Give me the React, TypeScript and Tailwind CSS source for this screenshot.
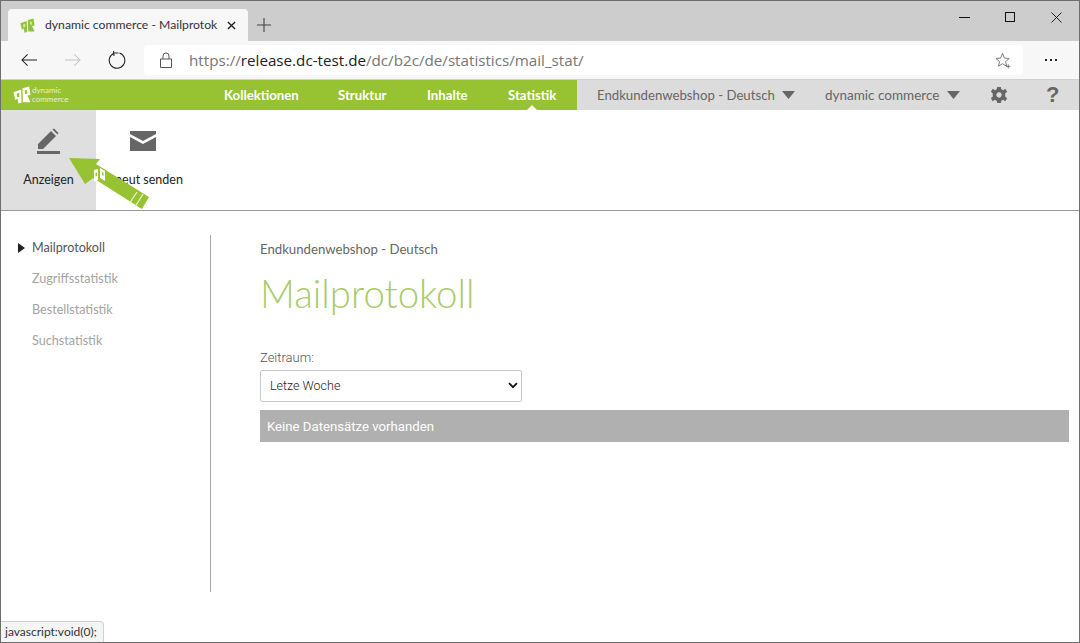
import React from "react";

const site = { fontFamily: 'Lato, "Open Sans", sans-serif' };
const light = { fontFamily: 'Roboto, "Open Sans", sans-serif' };

function Logo({ className, color, cut }: { className: string; color: string; cut: string }) {
  return (
    <svg viewBox="0 0 20 20" className={className}>
      <path d="M0.5 7 L9 4 L9.5 18.5 L6 19.5 L5 14 L2.5 15.5 Z" fill={color} />
      <path d="M10.5 2.5 L18 0.5 L19.5 10 L16 10.5 L19.5 18 L11 18 Z" fill={color} />
      <path d="M4 8.5 L7 7.5 L7 12 L4.5 12.5 Z M13 5 L15.5 4.5 L16 8.5 L13.5 9 Z" fill={cut} />
    </svg>
  );
}

function Caret() {
  return (
    <svg viewBox="0 0 13 8" className="h-[8px] w-[13px]">
      <path d="M0 0 H13 L6.5 8 Z" fill="#666666" />
    </svg>
  );
}

export default function App() {
  return (
    <div className="relative flex h-[643px] w-[1080px] flex-col overflow-hidden border border-[#6e6e6e] bg-white" style={site}>
      {/* Tab strip */}
      <div className="flex h-[40px] shrink-0 items-end bg-[#cdcdcd]">
        <div className="ml-[7px] flex h-[32px] w-[240px] items-center rounded-t-[4px] bg-[#f7f7f7] pl-[12px] pr-[10px]">
          <Logo className="h-[15px] w-[15px] shrink-0" color="#8fc23f" cut="#d6e8a8" />
          <span className="ml-[10px] w-[174px] whitespace-nowrap text-[12.2px] text-[#333333]">dynamic commerce - Mailprotok</span>
          <svg viewBox="0 0 10 10" className="ml-[8px] h-[9px] w-[9px] shrink-0">
            <path d="M1 1 L9 9 M9 1 L1 9" stroke="#222222" strokeWidth="1.5" />
          </svg>
        </div>
        <svg viewBox="0 0 14 14" className="mb-[9px] ml-[9px] h-[14px] w-[14px]">
          <path d="M7 0 V14 M0 7 H14" stroke="#444444" strokeWidth="1.1" />
        </svg>
        <div className="mb-[8px] ml-auto flex h-[32px] items-center">
          <div className="flex w-[46px] justify-center">
            <div className="h-px w-[11px] bg-[#111111]" />
          </div>
          <div className="flex w-[46px] justify-center">
            <div className="h-[10px] w-[10px] border border-[#111111]" />
          </div>
          <div className="flex w-[46px] justify-center">
            <svg viewBox="0 0 11 11" className="h-[11px] w-[11px]">
              <path d="M0.5 0.5 L10.5 10.5 M10.5 0.5 L0.5 10.5" stroke="#111111" strokeWidth="0.9" />
            </svg>
          </div>
        </div>
      </div>

      {/* Address bar */}
      <div className="flex h-[39px] shrink-0 items-center border-b border-[#d0d0d0] bg-[#f7f7f7]">
        <svg viewBox="0 0 18 14" className="ml-[20px] h-[14px] w-[17px]">
          <path d="M17 7 H1 M7 1 L1 7 L7 13" stroke="#222222" strokeWidth="1.1" fill="none" />
        </svg>
        <svg viewBox="0 0 18 14" className="ml-[26px] h-[14px] w-[17px]">
          <path d="M1 7 H17 M11 1 L17 7 L11 13" stroke="#c4c4c4" strokeWidth="1.1" fill="none" />
        </svg>
        <svg viewBox="0 0 18 18" className="ml-[27px] h-[18px] w-[18px]">
          <path d="M6 2.2 A7.8 7.8 0 1 0 11.5 2 M5.5 0 L6 5 M5.8 2 L10.5 2" stroke="#222222" strokeWidth="1.1" fill="none" />
        </svg>
        <div className="ml-[18px] flex h-[30px] w-[879px] items-center rounded-[4px] bg-white pl-[16px]">
          <svg viewBox="0 0 12 16" className="h-[16px] w-[12px]">
            <path d="M0.5 7 H11.5 V15.5 H0.5 Z M3 7 V4 A3 3 0 0 1 9 4 V7" stroke="#555555" strokeWidth="1" fill="none" />
          </svg>
          <span className="ml-[17px] text-[15.2px] text-[#767676]" style={{ fontFamily: '"Open Sans", sans-serif' }}>
            https://<span className="text-[#222222]">release.dc-test.de</span>/dc/b2c/de/statistics/mail_stat/
          </span>
          <svg viewBox="0 0 18 18" className="ml-auto mr-[11px] h-[17px] w-[17px]">
            <path d="M8 1.5 L10 6.5 L15 6.8 L11.2 10.2 L12.3 15 L8 12.4 L3.7 15 L4.8 10.2 L1 6.8 L6 6.5 Z" stroke="#666666" strokeWidth="0.9" fill="none" />
            <path d="M14 13 V17.5 M11.8 15.2 H16.3" stroke="#666666" strokeWidth="0.9" />
          </svg>
        </div>
        <div className="ml-[22px] flex gap-[3px]">
          <div className="h-[2px] w-[2px] bg-[#222222]" />
          <div className="h-[2px] w-[2px] bg-[#222222]" />
          <div className="h-[2px] w-[2px] bg-[#222222]" />
        </div>
      </div>

      {/* Site nav */}
      <div className="flex h-[30px] shrink-0 items-stretch bg-[#97c231]">
        <div className="flex w-[223px] items-center pl-[12px]">
          <Logo className="h-[18px] w-[18px]" color="#ffffff" cut="#97c231" />
          <div className="ml-[1px] flex flex-col text-[8px] leading-[9px] text-[#e8f2cc]">
            <span>dynamic</span>
            <span>commerce</span>
          </div>
        </div>
        <div className="relative flex w-[353px] items-center pt-px text-[13.2px] font-bold text-white">
          <span className="w-[114px]">Kollektionen</span>
          <span className="w-[89px]">Struktur</span>
          <span className="w-[81px]">Inhalte</span>
          <span>Statistik</span>
          <div className="absolute bottom-0 left-[303px] h-0 w-0 border-x-[5px] border-b-[5px] border-x-transparent border-b-white" />
        </div>
        <div className="flex flex-1 items-center bg-[#dcdcdc] pl-[20px] text-[13.2px] text-[#666666]">
          <span className="w-[185px] whitespace-nowrap pt-px">Endkundenwebshop - Deutsch</span>
          <Caret />
          <span className="ml-[30px] w-[122px] whitespace-nowrap text-[13.5px]">dynamic commerce</span>
          <Caret />
          <svg viewBox="0 0 20 20" className="ml-[30px] h-[18px] w-[18px]">
            <path
              fillRule="evenodd"
              d="M8 1 H12 L12.6 3.7 L14.6 4.6 L17 3.1 L19 6.5 L16.9 8.2 V11.8 L19 13.5 L17 16.9 L14.6 15.4 L12.6 16.3 L12 19 H8 L7.4 16.3 L5.4 15.4 L3 16.9 L1 13.5 L3.1 11.8 V8.2 L1 6.5 L3 3.1 L5.4 4.6 L7.4 3.7 Z M10 7 A3 3 0 1 0 10.01 7 Z"
              fill="#666666"
            />
          </svg>
          <span className="ml-[38px] text-[22px] font-bold leading-none text-[#666666]" style={{ fontFamily: '"Liberation Sans", sans-serif' }}>?</span>
        </div>
      </div>

      {/* Action bar */}
      <div className="relative flex h-[101px] shrink-0 border-b border-[#9a9a9a] text-[12.5px] leading-[16px] text-[#222222]">
        <div className="flex w-[95px] flex-col items-center bg-[#dfdfdf] pt-[18px]">
          <svg viewBox="0 0 24 26" className="h-[26px] w-[24px]">
            <path d="M1 16 L14 3 L19 8 L6 21 L1 21 Z M15.5 1.5 L17 0.5 L21.5 5 L20.5 6.5 Z" fill="#666666" />
            <rect x="0" y="23" width="23" height="3" fill="#666666" />
          </svg>
          <span className="mt-[18px]">Anzeigen</span>
        </div>
        <div className="flex w-[95px] flex-col items-center pt-[21px]">
          <svg viewBox="0 0 26 20" className="-ml-[2px] h-[20px] w-[26px]">
            <path d="M0 0 H26 V3 L13 10 L0 3 Z M0 6 L13 13 L26 6 V20 H0 Z" fill="#666666" />
          </svg>
          <span className="ml-[11px] mt-[21px] whitespace-nowrap">neut senden</span>
        </div>
        {/* Arrow overlay */}
        <svg viewBox="0 0 90 60" className="absolute left-[68px] top-[46px] h-[60px] w-[90px]">
          <path d="M0 2 L31 3 L27 8 L80 41 L73 53 L24 22 L16 28 Z" fill="#97c231" />
          <path d="M68 36 L60 48 M74 38 L66 51" stroke="#e8f2cc" strokeWidth="1.3" />
          <path d="M25 14 L29 13 L29 24 L25 26 Z M31 12 L36 15 L36 25 L31 22 Z" fill="#ffffff" />
          <path d="M26.5 17 L28 16.5 L28 20 L26.5 20.5 Z M33 16 L34.5 17 L34.5 20 L33 19 Z" fill="#97c231" />
        </svg>
      </div>

      {/* Body */}
      <div className="flex min-h-0 flex-1 pt-[24px]">
        <div className="flex h-[357px] w-[210px] shrink-0 flex-col gap-[11px] border-r border-[#a8a8a8] pl-[17px] pt-[3px] text-[12.6px] leading-[20px] text-[#a3a3a3]">
          <div className="flex items-center text-[#555555]">
            <svg viewBox="0 0 7 10" className="h-[10px] w-[7px]"><path d="M0 0 L7 5 L0 10 Z" fill="#222222" /></svg>
            <span className="ml-[7px]">Mailprotokoll</span>
          </div>
          <span className="pl-[14px]">Zugriffsstatistik</span>
          <span className="pl-[14px]">Bestellstatistik</span>
          <span className="pl-[14px]">Suchstatistik</span>
        </div>
        <div className="flex min-w-0 flex-1 flex-col pl-[49px] pr-[10px]">
          <div className="mt-[5px] text-[13.2px] leading-[18px] text-[#666666]">Endkundenwebshop - Deutsch</div>
          <h1 className="mt-[10px] text-[38.4px] font-light leading-[50px] text-[#a9cb69]">Mailprotokoll</h1>
          <div className="mt-[32px] text-[13px] font-light leading-[16px] text-[#555555]" style={light}>Zeitraum:</div>
          <div className="relative mt-[4px] flex h-[32px] w-[262px] items-center rounded-[2px] border border-[#c8c8c8] pl-[9px] text-[12.5px] font-light text-[#222222]" style={light}>
            Letze Woche
            <svg viewBox="0 0 12 8" className="absolute right-[3px] top-[11px] h-[7px] w-[10px]">
              <path d="M1.2 1.2 L6 6 L10.8 1.2" stroke="#111111" strokeWidth="2.2" fill="none" />
            </svg>
          </div>
          <div className="mt-[8px] flex h-[32px] items-center bg-[#b0b0b0] pl-[7px] pt-px text-[13.2px] font-normal text-white" style={light}>Keine Datensätze vorhanden</div>
        </div>
      </div>

      {/* Status tooltip */}
      <div className="absolute bottom-0 left-0 flex h-[21px] items-center rounded-tr-[4px] border-r border-t border-[#d0d0d0] bg-[#f5f5f5] pl-[4px] pr-[6px] text-[12px] text-[#333333]">javascript:void(0);</div>
    </div>
  );
}
